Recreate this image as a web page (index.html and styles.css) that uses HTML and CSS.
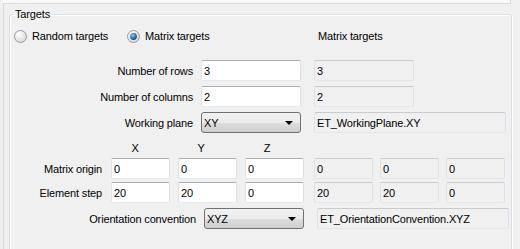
FILE: index.html
```html
<!DOCTYPE html>
<html>
<head>
    <meta charset="UTF-8">
    <title>Targets</title>
    <link rel="stylesheet" href="styles.css">
</head>
<body>
    <div class="top-strip"></div>
    <div class="page">
        <fieldset class="group">
            <legend>Targets</legend>

            <div class="radio-row">
                <label class="radio random">
                    <svg class="radio-mark" width="13" height="13" viewBox="0 0 13 13">
                        <circle cx="6.5" cy="6.5" r="6" fill="url(#radioFill)" stroke="#9a9a9a"/>
                    </svg>
                    Random targets
                </label>
                <label class="radio matrix">
                    <svg class="radio-mark" width="13" height="13" viewBox="0 0 13 13">
                        <defs>
                            <radialGradient id="radioFill" cx="0.35" cy="0.3" r="0.8">
                                <stop offset="0" stop-color="#ffffff"/>
                                <stop offset="1" stop-color="#d4d4d4"/>
                            </radialGradient>
                            <radialGradient id="dotFill" cx="0.4" cy="0.35" r="0.7">
                                <stop offset="0" stop-color="#8ad2fb"/>
                                <stop offset="0.55" stop-color="#2a7ac0"/>
                                <stop offset="1" stop-color="#123f6e"/>
                            </radialGradient>
                        </defs>
                        <circle cx="6.5" cy="6.5" r="6" fill="url(#radioFill)" stroke="#9a9a9a"/>
                        <circle cx="6.5" cy="6.5" r="3.4" fill="url(#dotFill)"/>
                    </svg>
                    Matrix targets
                </label>
                <span class="echo-title">Matrix targets</span>
            </div>

            <div class="row">
                <label class="row-label">Number of rows</label>
                <input class="edit" type="text" value="3">
                <input class="edit readonly" type="text" value="3" readonly>
            </div>
            <div class="row">
                <label class="row-label">Number of columns</label>
                <input class="edit" type="text" value="2">
                <input class="edit readonly" type="text" value="2" readonly>
            </div>
            <div class="row">
                <label class="row-label">Working plane</label>
                <div class="combo">
                    <span>XY</span>
                    <svg class="combo-arrow" width="8" height="4" viewBox="0 0 8 4"><path d="M0 0H8L4 4Z" fill="#000"/></svg>
                </div>
                <input class="edit readonly wide" type="text" value="ET_WorkingPlane.XY" readonly>
            </div>

            <div class="axis-head">
                <span>X</span>
                <span>Y</span>
                <span>Z</span>
            </div>

            <div class="vec-row">
                <label class="vec-label">Matrix origin</label>
                <div class="vec-group">
                    <input class="edit small" type="text" value="0">
                    <input class="edit small" type="text" value="0">
                    <input class="edit small" type="text" value="0">
                </div>
                <div class="vec-group echo">
                    <input class="edit small readonly" type="text" value="0" readonly>
                    <input class="edit small readonly" type="text" value="0" readonly>
                    <input class="edit small readonly" type="text" value="0" readonly>
                </div>
            </div>
            <div class="vec-row step">
                <label class="vec-label">Element step</label>
                <div class="vec-group">
                    <input class="edit small" type="text" value="20">
                    <input class="edit small" type="text" value="20">
                    <input class="edit small" type="text" value="0">
                </div>
                <div class="vec-group echo">
                    <input class="edit small readonly" type="text" value="20" readonly>
                    <input class="edit small readonly" type="text" value="20" readonly>
                    <input class="edit small readonly" type="text" value="0" readonly>
                </div>
            </div>

            <div class="row orient">
                <label class="row-label">Orientation convention</label>
                <div class="combo">
                    <span>XYZ</span>
                    <svg class="combo-arrow" width="8" height="4" viewBox="0 0 8 4"><path d="M0 0H8L4 4Z" fill="#000"/></svg>
                </div>
                <input class="edit readonly wide" type="text" value="ET_OrientationConvention.XYZ" readonly>
            </div>
        </fieldset>
    </div>
</body>
</html>
```

FILE: styles.css
```css
* {
    box-sizing: border-box;
}

html, body {
    height: 249px;
}

body {
    margin: 0;
    overflow: hidden;
    background-color: #f0f0f0;
    color: #000;
    font-family: 'Liberation Sans', Arial, sans-serif;
    font-size: 11px;
    letter-spacing: -0.15px;
}

.top-strip {
    margin-left: 3px;
    width: 508px;
    height: 4px;
    background-color: #f9f9f9;
    border-right: 1px solid #dcdcdc;
    border-bottom: 1px solid #dcdcdc;
}

.page {
    margin-left: 3px;
    height: 245px;
    overflow: hidden;
    padding: 4px 0 0 5px;
    border-left: 1px solid #d9d9d9;
}

.group {
    margin: 0;
    padding: 0;
    width: 503px;
    height: 250px;
    border: 1px solid #d5dfe5;
    border-radius: 3px;
    box-shadow: inset 1px 1px 0 #fff, 1px 1px 0 #fff;
}

.group legend {
    margin-left: 3px;
    padding: 0 2px;
    line-height: 13px;
}

/* radio buttons */
.radio-row {
    display: flex;
    align-items: center;
    height: 20px;
    margin-top: 5px;
    margin-bottom: 14px;
}

.radio {
    display: flex;
    align-items: center;
    gap: 5px;
}

.radio.random {
    margin-left: 4px;
    width: 113px;
}

.radio.matrix {
    width: 191px;
}

.radio-mark {
    display: block;
    flex: none;
}

/* label / field rows */
.row {
    display: flex;
    align-items: center;
    height: 21px;
    margin-bottom: 5px;
}

.row-label {
    width: 183px;
    margin-right: 8px;
    text-align: right;
}

.edit {
    width: 100px;
    height: 21px;
    margin: 0;
    padding: 0 2px;
    font: inherit;
    letter-spacing: inherit;
    color: #000;
    background-color: #fff;
    border: 1px solid;
    border-color: #abadb3 #dbdfe6 #e3e9ef #e2e3ea;
    border-radius: 2px;
    outline: none;
}

.edit.readonly {
    margin-left: 13px;
    background-color: #f0f0f0;
    border-color: #c9cbd0 #dde0e5 #e3e6ea #dfe1e5;
}

.edit.wide {
    width: 192px;
}

.combo {
    display: flex;
    align-items: center;
    justify-content: space-between;
    width: 100px;
    height: 21px;
    padding: 0 7px 0 2px;
    border: 1px solid #707070;
    border-radius: 3px;
    background: linear-gradient(#f2f2f2 0%, #ebebeb 50%, #dddddd 51%, #cfcfcf 100%);
}

.combo-arrow {
    display: block;
}

/* vector rows */
.axis-head {
    display: flex;
    gap: 6px;
    height: 13px;
    line-height: 13px;
    margin-top: 9px;
    margin-bottom: 3px;
    padding-left: 95px;
}

.axis-head span {
    width: 60px;
    text-align: center;
}

.vec-row {
    display: flex;
    align-items: center;
    height: 21px;
    margin-bottom: 3px;
}

.vec-row.step {
    margin-bottom: 5px;
}

.vec-label {
    width: 92px;
    margin-right: 9px;
    text-align: right;
}

.vec-group {
    display: flex;
    gap: 8px;
}

.vec-group.echo {
    gap: 7px;
    margin-left: 10px;
}

.edit.small {
    width: 59px;
    margin-left: 0;
}

.row.orient .row-label {
    width: 186px;
    margin-right: 8px;
}
```
